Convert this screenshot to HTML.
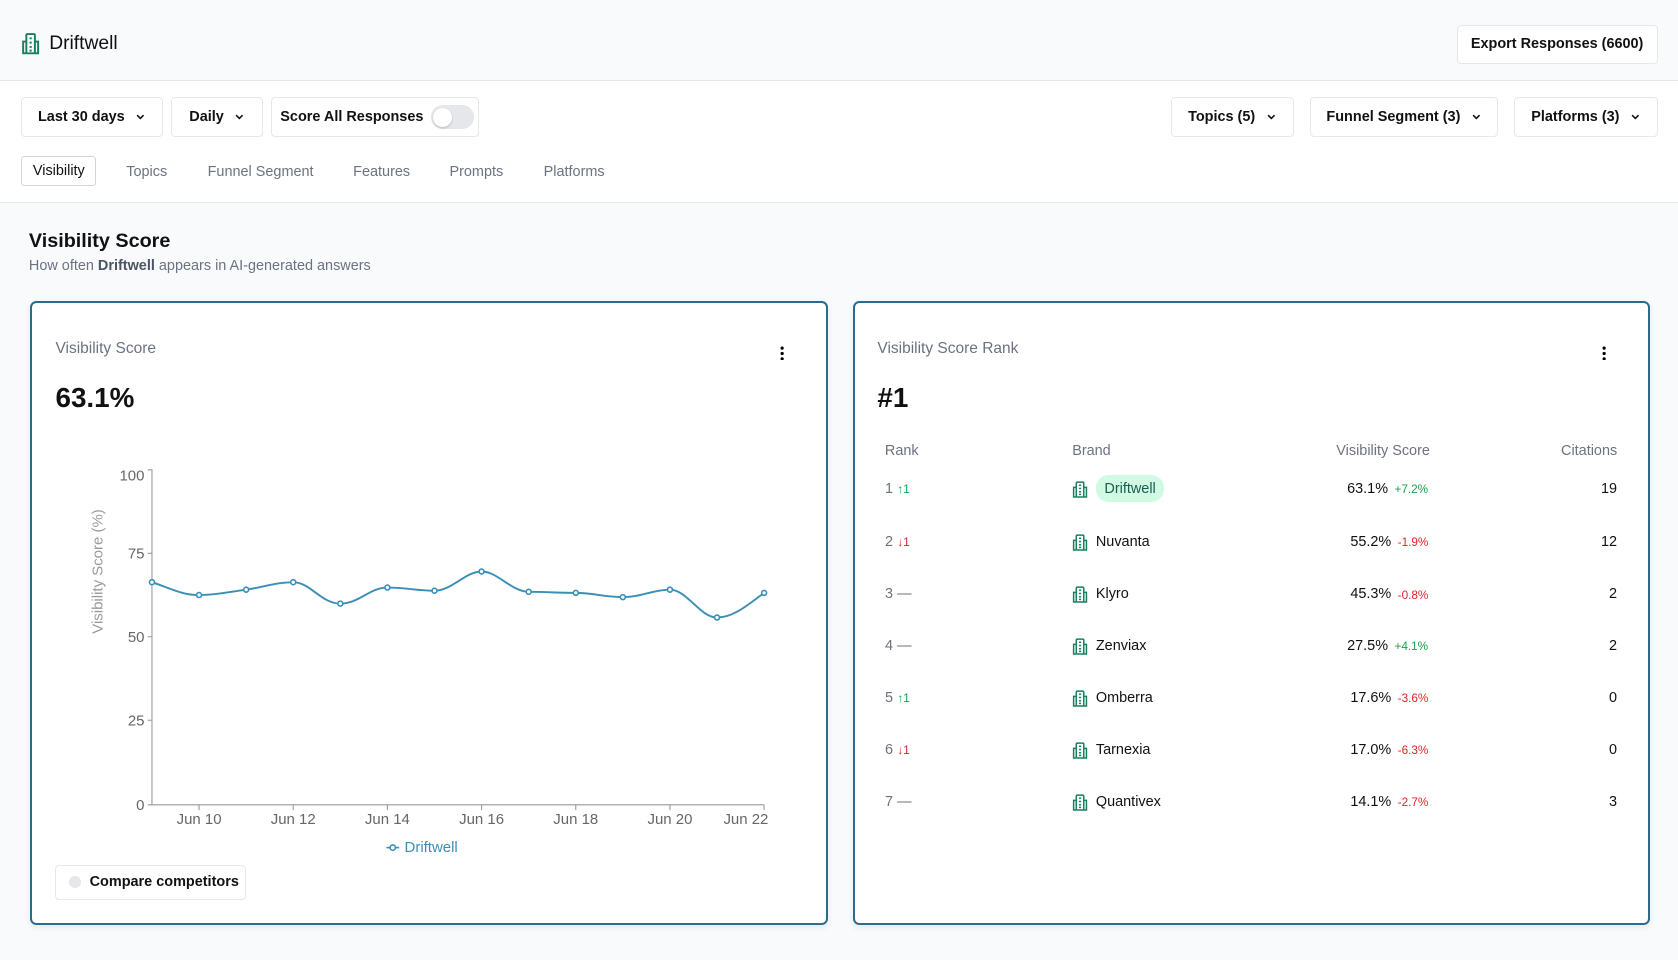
<!DOCTYPE html>
<html><head><meta charset="utf-8"><style>
html,body{margin:0;padding:0;overflow:hidden}
body{width:1568px;height:897px;zoom:1.0702;background:#f8fafc;font-family:"Liberation Sans",Arial,sans-serif;color:#111;position:relative}
.a{position:absolute}
.btn{position:absolute;background:#fff;border:1px solid #e5e7eb;border-radius:4px;box-sizing:border-box;font-weight:bold;font-size:13.5px;display:flex;align-items:center;justify-content:center;gap:10px;white-space:nowrap}
.chev{width:10px;height:10px}
.tab{position:absolute;top:153px;font-size:13.5px;color:#6b7280}
.card{position:absolute;top:281px;height:583px;background:#fff;border:2px solid #2b6c8c;border-radius:6px;box-sizing:border-box;box-shadow:0 2px 6px rgba(0,0,0,.08)}
.row{position:absolute;left:0;width:100%;font-size:13.5px}
.row span{position:absolute}
.g{color:#16a34a}.r{color:#dc2626}
.keb{position:absolute;width:4px;height:14px}
</style></head><body>
<div class="a" style="left:0;top:0;width:1568px;height:75px;border-bottom:1px solid #e5e7eb"></div>
<svg class="a" style="left:20px;top:31px" width="18" height="20" viewBox="0 0 18 20" fill="none" stroke="#16805f" stroke-width="1.8"><rect x="5" y="1" width="8" height="18" rx="1"/><path d="M5 8H2v11h3M13 8h3v11h-3M8 5h2M8 9h2M8 13h2M8 16.5h2"/></svg>
<div class="a" style="left:46px;top:31px;font-size:18px">Driftwell</div>
<div class="btn" style="left:1361px;top:23px;width:188px;height:37px">Export Responses (6600)</div>
<div class="a" style="left:0;top:76px;width:1568px;height:113px;background:#fff;border-bottom:1px solid #e5e7eb"></div>
<svg width="0" height="0" style="position:absolute"><defs><path id="cv" d="M2 3l3 3 3-3" fill="none" stroke="#111" stroke-width="1.5"/></defs></svg>
<div class="btn" style="left:20px;top:91px;width:132px;height:37px">Last 30 days <svg class="chev"><use href="#cv"/></svg></div>
<div class="btn" style="left:160px;top:91px;width:86px;height:37px">Daily <svg class="chev"><use href="#cv"/></svg></div>
<div class="btn" style="left:253px;top:91px;width:195px;height:37px;justify-content:flex-start;padding-left:8px;gap:7px">Score All Responses <div style="width:40px;height:22px;border-radius:11px;background:#e5e7eb;position:relative"><div style="position:absolute;left:2px;top:2px;width:18px;height:18px;border-radius:50%;background:#fff;box-shadow:0 1px 2px rgba(0,0,0,.2)"></div></div></div>
<div class="btn" style="left:1094px;top:91px;width:115px;height:37px">Topics (5) <svg class="chev"><use href="#cv"/></svg></div>
<div class="btn" style="left:1224px;top:91px;width:176px;height:37px">Funnel Segment (3) <svg class="chev"><use href="#cv"/></svg></div>
<div class="btn" style="left:1415px;top:91px;width:134px;height:37px">Platforms (3) <svg class="chev"><use href="#cv"/></svg></div>
<div class="a" style="left:20px;top:146px;width:70px;height:28px;border:1px solid #d1d5db;border-radius:3px;box-sizing:border-box;font-size:13.5px;text-align:center;line-height:27px">Visibility</div>
<div class="tab" style="left:118px">Topics</div>
<div class="tab" style="left:194px">Funnel Segment</div>
<div class="tab" style="left:330px">Features</div>
<div class="tab" style="left:420px">Prompts</div>
<div class="tab" style="left:508px">Platforms</div>
<div class="a" style="left:27px;top:215px;font-size:18.5px;font-weight:bold">Visibility Score</div>
<div class="a" style="left:27px;top:241px;font-size:13.5px;color:#6b7280">How often <b style="color:#4b5563">Driftwell</b> appears in AI-generated answers</div>

<div class="card" style="left:28px;width:746px">
<div class="a" style="left:22px;top:35px;font-size:14.5px;color:#6b7280">Visibility Score</div>
<svg class="keb" style="left:699px;top:40px"><circle cx="2" cy="2" r="1.5"/><circle cx="2" cy="7" r="1.5"/><circle cx="2" cy="12" r="1.5"/></svg>
<div class="a" style="left:22px;top:74px;font-size:26px;font-weight:bold">63.1%</div>
<div class="a" style="left:22px;top:525px;width:178px;height:33px;border:1px solid #e5e7eb;border-radius:4px;box-sizing:border-box;font-size:13.5px;font-weight:bold;display:flex;align-items:center;padding-left:12px;gap:8px;white-space:nowrap"><span style="width:11px;height:11px;border-radius:50%;background:#e5e7eb"></span>Compare competitors</div>
</div>
<svg class="a" style="left:0;top:0" width="800" height="897">
<g font-family="Liberation Sans,Arial,sans-serif" font-size="14" fill="#666">
<text x="135" y="449" text-anchor="end">100</text><text x="135" y="522" text-anchor="end">75</text><text x="135" y="600" text-anchor="end">50</text><text x="135" y="678" text-anchor="end">25</text><text x="135" y="757" text-anchor="end">0</text>
<text transform="translate(96 534) rotate(-90)" text-anchor="middle" fill="#999">Visibility Score (%)</text>
<g text-anchor="middle"><text x="186" y="770">Jun 10</text><text x="274" y="770">Jun 12</text><text x="362" y="770">Jun 14</text><text x="450" y="770">Jun 16</text><text x="538" y="770">Jun 18</text><text x="626" y="770">Jun 20</text><text x="697" y="770">Jun 22</text></g>
<text x="378" y="796" fill="#3a8fb7">Driftwell</text>
</g>
<g stroke="#999" stroke-width="1" fill="none"><path d="M138 439h4v313M138 752h576M138 517h4M138 595h4M138 673h4M186 752v5M274 752v5M362 752v5M450 752v5M538 752v5M626 752v5M714 752v5"/></g>
<path d="M361 792h12" stroke="#3a8fb7" stroke-width="1.5"/><circle cx="367" cy="792" r="2.5" fill="#fff" stroke="#3a8fb7" stroke-width="1.5"/>
<path d="M142 544C160 550 170 556 186 556S215 553 230 551S258 544 274 544S300 564 318 564S345 549 362 549S390 552 406 552S435 534 450 534S478 553 494 553S522 554 538 554S565 558 582 558S610 551 626 551S654 577 670 577S700 564 714 554" fill="none" stroke="#3a8fb7" stroke-width="1.8"/>
<g fill="#fff" stroke="#3a8fb7" stroke-width="1.5">
<circle cx="142" cy="544" r="2.3"/><circle cx="186" cy="556" r="2.3"/><circle cx="230" cy="551" r="2.3"/><circle cx="274" cy="544" r="2.3"/><circle cx="318" cy="564" r="2.3"/><circle cx="362" cy="549" r="2.3"/><circle cx="406" cy="552" r="2.3"/><circle cx="450" cy="534" r="2.3"/><circle cx="494" cy="553" r="2.3"/><circle cx="538" cy="554" r="2.3"/><circle cx="582" cy="558" r="2.3"/><circle cx="626" cy="551" r="2.3"/><circle cx="670" cy="577" r="2.3"/><circle cx="714" cy="554" r="2.3"/></g>
</svg>

<svg width="0" height="0" style="position:absolute"><defs><g id="bi" fill="none" stroke="#16805f" stroke-width="1.4"><rect x="4" y="1" width="7" height="14" rx="1"/><path d="M4 6H1.5v9H4M11 6h2.5v9H11M6.5 4h2M6.5 7h2M6.5 10h2M6.5 12.5h2"/></g></defs></svg>
<div class="card" style="left:797px;width:745px">
<div class="a" style="left:21px;top:35px;font-size:14.5px;color:#6b7280">Visibility Score Rank</div>
<svg class="keb" style="left:698px;top:40px"><circle cx="2" cy="2" r="1.5"/><circle cx="2" cy="7" r="1.5"/><circle cx="2" cy="12" r="1.5"/></svg>
<div class="a" style="left:21px;top:74px;font-size:26px;font-weight:bold">#1</div>
<div class="row" style="top:131px;color:#6b7280"><span style="left:28px">Rank</span><span style="left:203px">Brand</span><span style="right:204px">Visibility Score</span><span style="right:29px">Citations</span></div>
</div>
<div class="a" style="left:799px;top:283px;width:741px;height:580px">
<div class="row" style="top:166px"><span style="left:28px;color:#6b7280">1 <small class="g">↑1</small></span><svg class="a" style="left:203px;top:0" width="15" height="16"><use href="#bi"/></svg><span style="left:225px;top:-5px;background:#d1fae5;color:#16604a;border-radius:12px;padding:5px 8px">Driftwell</span><span style="right:243px">63.1%</span><span style="left:504px;font-size:11px;top:2px" class="g">+7.2%</span><span style="right:29px">19</span></div>
<div class="row" style="top:216px"><span style="left:28px;color:#6b7280">2 <small class="r">↓1</small></span><svg class="a" style="left:203px;top:0" width="15" height="16"><use href="#bi"/></svg><span style="left:225px">Nuvanta</span><span style="right:240px">55.2%</span><span style="left:507px;font-size:11px;top:2px" class="r">-1.9%</span><span style="right:29px">12</span></div>
<div class="row" style="top:265px"><span style="left:28px;color:#6b7280">3 —</span><svg class="a" style="left:203px;top:0" width="15" height="16"><use href="#bi"/></svg><span style="left:225px">Klyro</span><span style="right:240px">45.3%</span><span style="left:507px;font-size:11px;top:2px" class="r">-0.8%</span><span style="right:29px">2</span></div>
<div class="row" style="top:313px"><span style="left:28px;color:#6b7280">4 —</span><svg class="a" style="left:203px;top:0" width="15" height="16"><use href="#bi"/></svg><span style="left:225px">Zenviax</span><span style="right:243px">27.5%</span><span style="left:504px;font-size:11px;top:2px" class="g">+4.1%</span><span style="right:29px">2</span></div>
<div class="row" style="top:362px"><span style="left:28px;color:#6b7280">5 <small class="g">↑1</small></span><svg class="a" style="left:203px;top:0" width="15" height="16"><use href="#bi"/></svg><span style="left:225px">Omberra</span><span style="right:240px">17.6%</span><span style="left:507px;font-size:11px;top:2px" class="r">-3.6%</span><span style="right:29px">0</span></div>
<div class="row" style="top:410px"><span style="left:28px;color:#6b7280">6 <small class="r">↓1</small></span><svg class="a" style="left:203px;top:0" width="15" height="16"><use href="#bi"/></svg><span style="left:225px">Tarnexia</span><span style="right:240px">17.0%</span><span style="left:507px;font-size:11px;top:2px" class="r">-6.3%</span><span style="right:29px">0</span></div>
<div class="row" style="top:459px"><span style="left:28px;color:#6b7280">7 —</span><svg class="a" style="left:203px;top:0" width="15" height="16"><use href="#bi"/></svg><span style="left:225px">Quantivex</span><span style="right:240px">14.1%</span><span style="left:507px;font-size:11px;top:2px" class="r">-2.7%</span><span style="right:29px">3</span></div>
</div>
</body></html>
